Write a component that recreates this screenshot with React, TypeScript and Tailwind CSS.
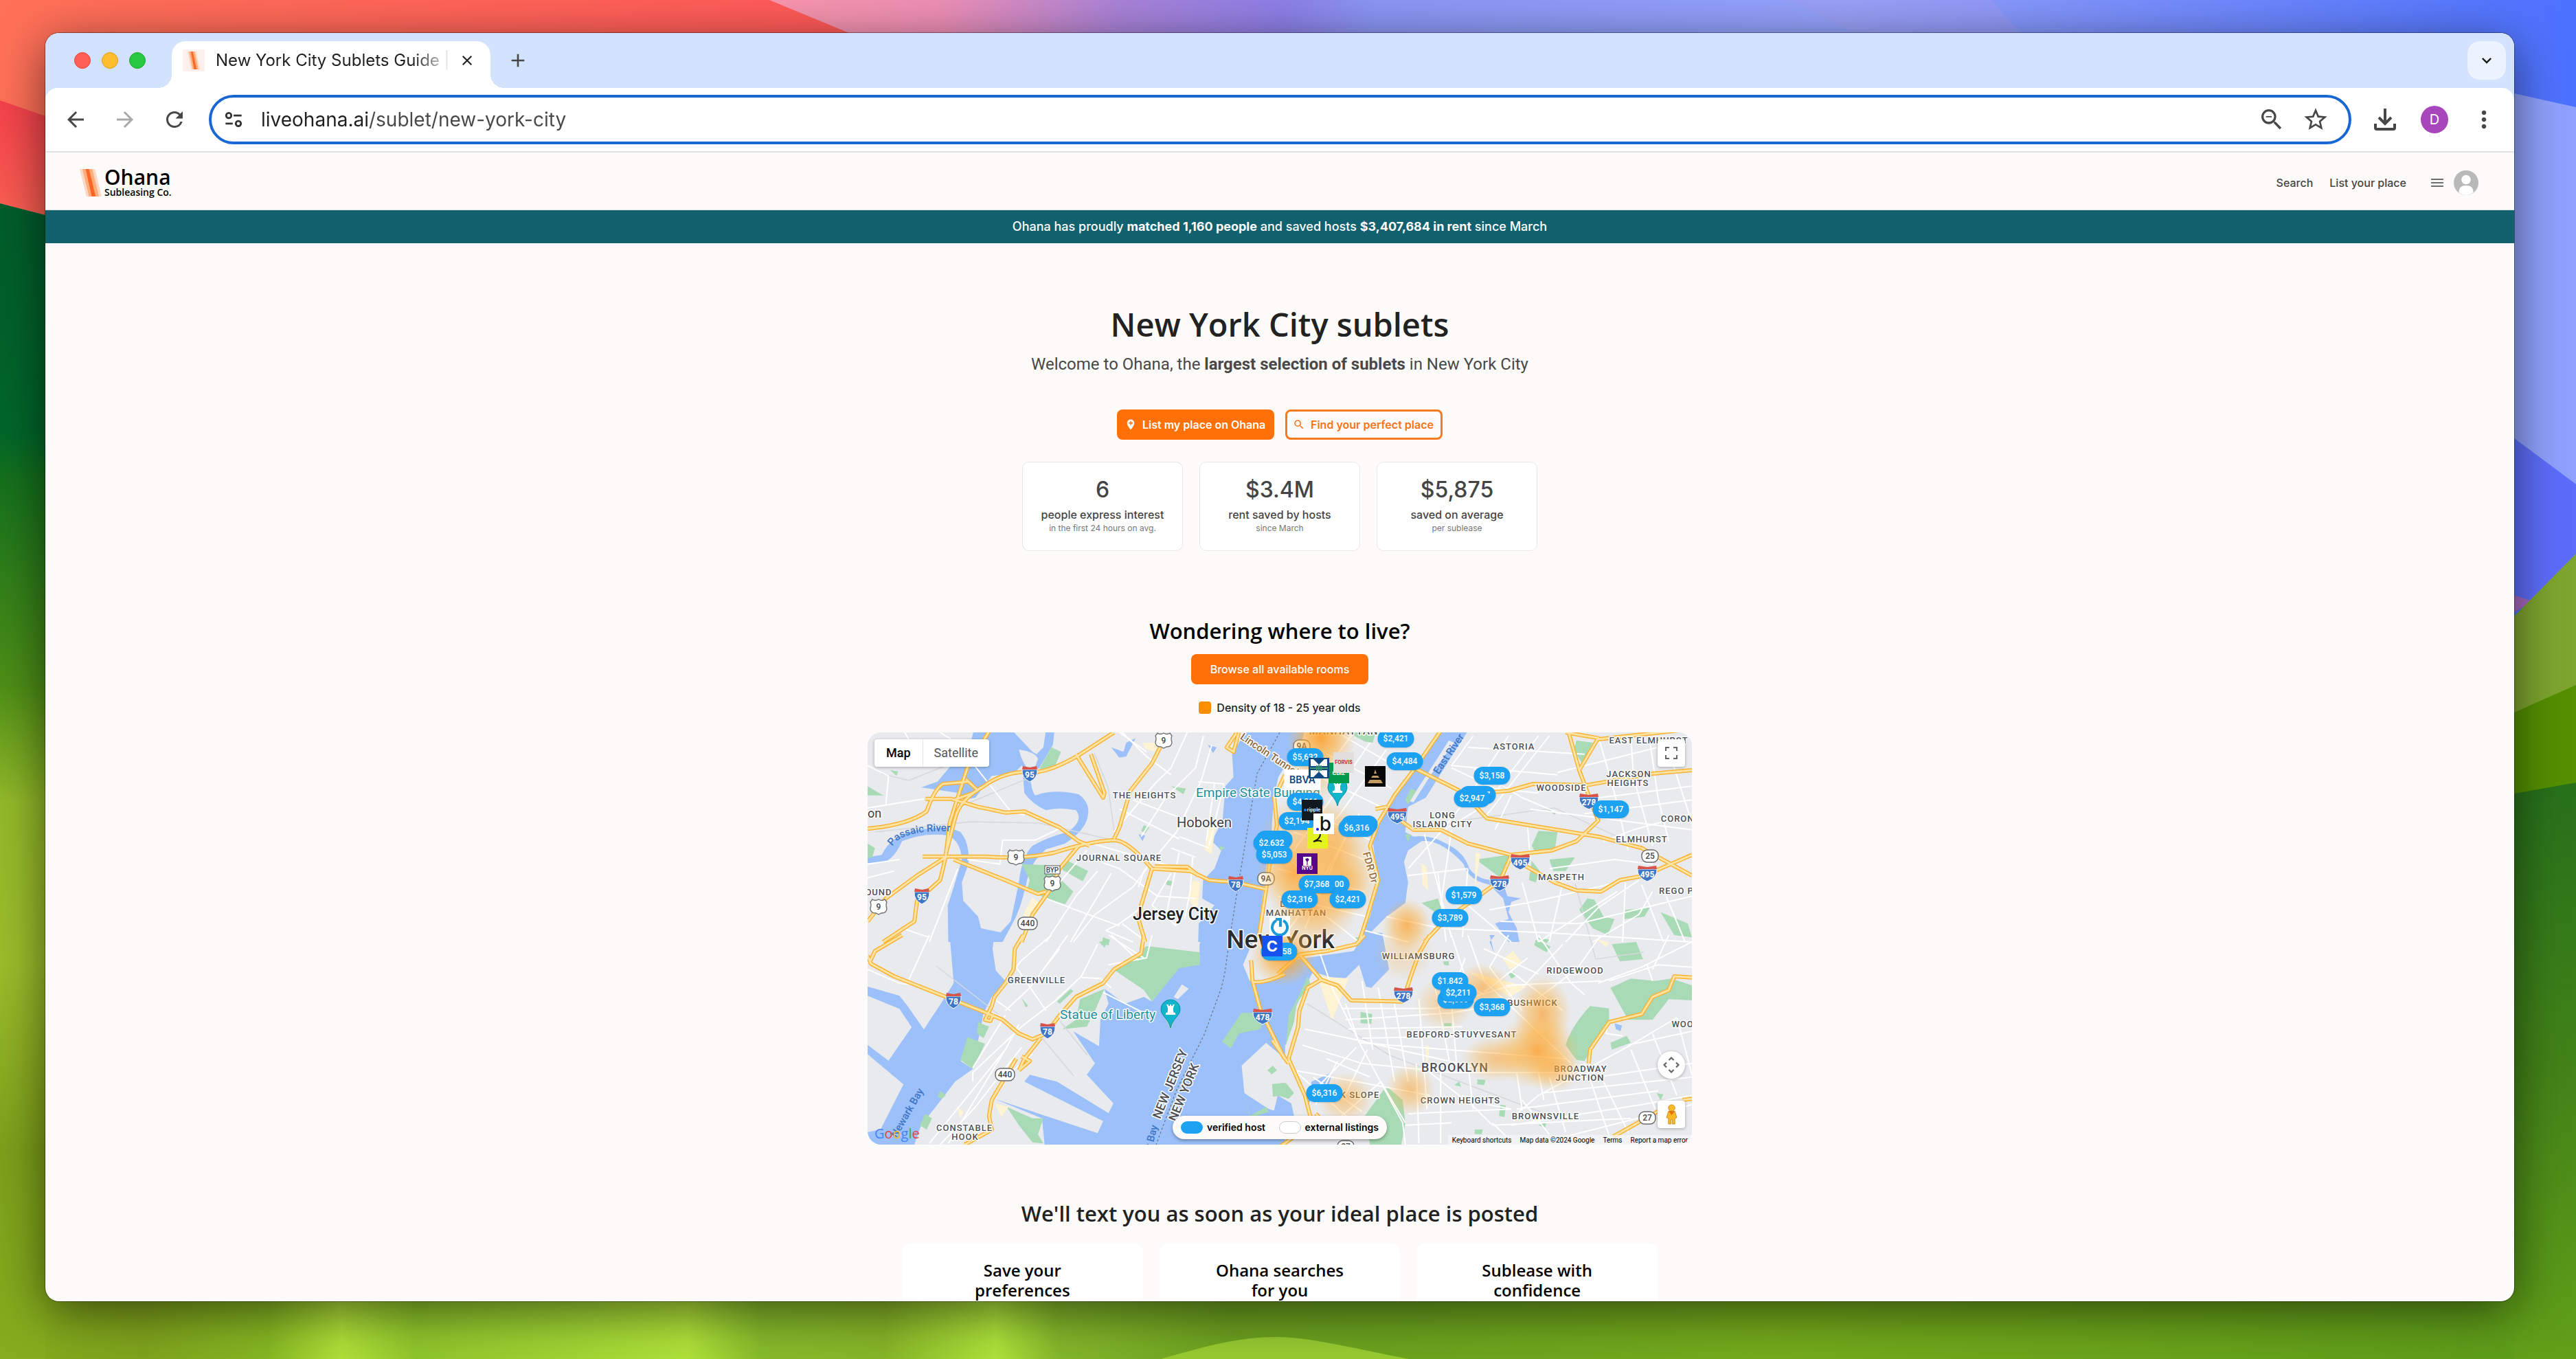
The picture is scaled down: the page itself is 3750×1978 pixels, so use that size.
import React from "react";
import {
  MdAdd,
  MdAddLocation,
  MdArrowBack,
  MdArrowForward,
  MdClose,
  MdExpandMore,
  MdMoreVert,
  MdRefresh,
  MdSearch,
  MdStarBorder,
  MdZoomOut,
} from "react-icons/md";

/* ---------- desktop wallpaper ---------- */

function Wallpaper() {
  return (
    <svg
      className="absolute inset-0 h-full w-full"
      viewBox="0 0 3750 1978"
      preserveAspectRatio="none"
      aria-hidden="true"
    >
      <defs>
        <linearGradient id="coral" x1="0" y1="0" x2="1" y2="0">
          <stop offset="0" stopColor="#ff7158" />
          <stop offset="1" stopColor="#ff5257" />
        </linearGradient>
        <linearGradient id="topband" gradientUnits="userSpaceOnUse" x1="1100" y1="0" x2="3750" y2="0">
          <stop offset="0" stopColor="#f996ac" />
          <stop offset="0.1" stopColor="#ee8fb4" />
          <stop offset="0.2" stopColor="#a983d8" />
          <stop offset="0.29" stopColor="#8d7fe6" />
          <stop offset="0.34" stopColor="#8a96f3" />
          <stop offset="0.6" stopColor="#93a3fb" />
          <stop offset="0.72" stopColor="#7f93fb" />
          <stop offset="1" stopColor="#4c71ff" />
        </linearGradient>
        <linearGradient id="leftRed" x1="0" y1="0" x2="0" y2="1">
          <stop offset="0" stopColor="#f5414b" />
          <stop offset="1" stopColor="#fd6f54" />
        </linearGradient>
        <linearGradient id="leftGreen" gradientUnits="userSpaceOnUse" x1="0" y1="290" x2="0" y2="1978">
          <stop offset="0" stopColor="#005c2b" />
          <stop offset="0.2" stopColor="#00672a" />
          <stop offset="0.24" stopColor="#14701c" />
          <stop offset="0.42" stopColor="#4e8f16" />
          <stop offset="0.52" stopColor="#93b929" />
          <stop offset="0.66" stopColor="#9cbd2b" />
          <stop offset="0.82" stopColor="#7da01a" />
          <stop offset="1" stopColor="#86ad1d" />
        </linearGradient>
        <linearGradient id="rightLow" gradientUnits="userSpaceOnUse" x1="0" y1="1140" x2="0" y2="1978">
          <stop offset="0" stopColor="#27711b" />
          <stop offset="0.5" stopColor="#438318" />
          <stop offset="1" stopColor="#62a019" />
        </linearGradient>
        <linearGradient id="bottom" gradientUnits="userSpaceOnUse" x1="66" y1="0" x2="3660" y2="0">
          <stop offset="0" stopColor="#83a91c" />
          <stop offset="0.04" stopColor="#7fa31c" />
          <stop offset="0.09" stopColor="#86b722" />
          <stop offset="0.12" stopColor="#b0e038" />
          <stop offset="0.15" stopColor="#8fc62b" />
          <stop offset="0.21" stopColor="#9fd433" />
          <stop offset="0.26" stopColor="#b0e239" />
          <stop offset="0.29" stopColor="#86bb2a" />
          <stop offset="0.34" stopColor="#87b527" />
          <stop offset="0.385" stopColor="#aee33a" />
          <stop offset="0.41" stopColor="#84b82a" />
          <stop offset="0.48" stopColor="#6ca11f" />
          <stop offset="0.55" stopColor="#6ba41e" />
          <stop offset="0.7" stopColor="#74ab1b" />
          <stop offset="1" stopColor="#5e9d19" />
        </linearGradient>
      </defs>
      <rect width="3750" height="1978" fill="url(#topband)" />
      <path d="M0 0H1120L1236 48 1600 220H0Z" fill="url(#coral)" />
      <path d="M2900 0 2940 48 2700 48 2600 0Z" fill="#a39cf0" opacity="0.4" />
      <path d="M0 146 66 169 200 220V400L66 313 0 296Z" fill="url(#leftRed)" />
      <path d="M0 296 66 313 300 400V1978H0Z" fill="url(#leftGreen)" />
      <path d="M3600 125 3660 136 3750 156V705L3660 638 3600 600Z" fill="#8fa1fd" />
      <path d="M3600 590 3660 638 3750 705V820L3600 940Z" fill="#5d6dfb" />
      <path d="M3640 860 3690 876 3640 900Z" fill="#a768c0" />
      <path d="M3600 925 3660 897 3750 806V1020L3600 1060Z" fill="#7ea52f" />
      <path d="M3600 1045 3660 1037 3750 997V1150L3600 1170Z" fill="#549000" />
      <path d="M3600 1160 3660 1155 3750 1139V1978H3600Z" fill="url(#rightLow)" />
      <rect x="66" y="1860" width="3594" height="118" fill="url(#bottom)" />
      <path d="M1690 1978C1770 1955 1810 1946 1857 1946S1960 1960 2050 1978Z" fill="#97cb31" />
    </svg>
  );
}

/* ---------- browser chrome ---------- */

function TuneIcon() {
  return (
    <svg viewBox="0 0 24 24" className="size-7" fill="none" stroke="#333" strokeWidth="2.4" aria-hidden="true">
      <circle cx="6" cy="7" r="3.2" />
      <path d="M12 7h10M2 17h9" />
      <circle cx="18" cy="17" r="3.2" />
    </svg>
  );
}

function BrandMark({ className }: { className: string }) {
  return (
    <svg viewBox="0 0 33 40" className={className} preserveAspectRatio="none" aria-hidden="true">
      <path d="M0 0H23L33 40H10Z" fill="#fdd9c4" />
      <path d="M4 0H19L29 40H14Z" fill="#fdae7c" />
      <path d="M9 0H14L24 40H18Z" fill="#ff6526" />
    </svg>
  );
}

function TabStrip() {
  return (
    <div className="flex h-20 shrink-0 items-end bg-[#d3e3fd] pr-3">
      <div className="flex h-full items-center gap-4 pr-[38px] pl-[42px]">
        <button aria-label="Close window" className="size-6 rounded-full border border-[#e2463f] bg-[#ff5f57]" />
        <button aria-label="Minimize window" className="size-6 rounded-full border border-[#e0a023] bg-[#febc2e]" />
        <button aria-label="Zoom window" className="size-6 rounded-full border border-[#1dad2b] bg-[#28c840]" />
      </div>
      <div className="relative flex h-[68px] w-[464px] items-center rounded-t-[20px] bg-white pr-[18px] pb-3 pl-4">
        <span className="absolute bottom-0 -left-5 size-5 bg-[radial-gradient(circle_at_0_0,transparent_20px,#fff_20px)]" />
        <span className="absolute -right-5 bottom-0 size-5 bg-[radial-gradient(circle_at_100%_0,transparent_20px,#fff_20px)]" />
        <span className="flex size-8 shrink-0 items-center justify-center bg-[#faf0ec]">
          <BrandMark className="h-[26px] w-[18px]" />
        </span>
        <span className="ml-4 flex-1 overflow-hidden bg-[linear-gradient(90deg,#1f1f1f_85%,#1f1f1f1a_100%)] bg-clip-text text-2xl whitespace-nowrap text-transparent">
          New York City Sublets Guide | Ohana
        </span>
        <button aria-label="Close tab" className="ml-3 flex size-8 items-center justify-center text-[#1f1f1f]">
          <MdClose className="size-6" />
        </button>
      </div>
      <button aria-label="New tab" className="mb-6 ml-6 flex size-8 items-center justify-center text-[#474747]">
        <MdAdd className="size-8" />
      </button>
      <button
        aria-label="Search tabs"
        className="mb-3 ml-auto flex size-14 items-center justify-center rounded-[18px] bg-[#ecf2fe] text-[#1f1f1f]"
      >
        <MdExpandMore className="size-7" />
      </button>
    </div>
  );
}

function Toolbar() {
  return (
    <div className="shrink-0 bg-[#d3e3fd]">
      <div className="flex h-[94px] items-center rounded-t-[18px] border-b-2 border-[#e1e3e1] bg-white pr-[28px] pl-[28px] text-[#474747]">
        <button aria-label="Back" className="flex size-8 items-center justify-center">
          <MdArrowBack className="size-9 shrink-0" />
        </button>
        <button aria-label="Forward" className="ml-10 flex size-8 items-center justify-center text-[#a9a9a9]">
          <MdArrowForward className="size-9 shrink-0" />
        </button>
        <button aria-label="Reload" className="ml-10 flex size-8 items-center justify-center">
          <MdRefresh className="size-9 shrink-0" />
        </button>
        <div className="ml-[34px] flex h-[72px] flex-1 items-center rounded-full border-4 border-[#1967d2] pr-8 pl-[18px]">
          <TuneIcon />
          <input
            aria-label="Address"
            defaultValue="liveohana.ai/sublet/new-york-city"
            className="ml-[26px] h-10 min-w-0 flex-1 bg-[linear-gradient(90deg,#1f1f1f_158px,#474747_158px)] bg-clip-text text-[28px] text-transparent outline-none"
          />
          <button aria-label="Zoom level" className="flex size-8 items-center justify-center">
            <MdZoomOut className="size-10 shrink-0" />
          </button>
          <button aria-label="Bookmark" className="ml-8 flex size-8 items-center justify-center">
            <MdStarBorder className="size-10 shrink-0" />
          </button>
        </div>
        <button aria-label="Downloads" className="ml-[33px] flex size-8 items-center justify-center">
          <svg viewBox="0 0 32 32" className="size-8 shrink-0" fill="none" stroke="#474747" strokeWidth="4" aria-hidden="true">
            <path d="M16 0V20M7 13 16 22 25 13M2 22V28Q2 30 4 30H28Q30 30 30 28V22" />
          </svg>
        </button>
        <button
          aria-label="Profile"
          className="ml-9 flex size-10 items-center justify-center rounded-full bg-[#a846bc] text-xl text-white"
        >
          D
        </button>
        <button aria-label="Menu" className="ml-9 flex size-8 items-center justify-center">
          <MdMoreVert className="size-10 shrink-0" />
        </button>
      </div>
    </div>
  );
}

/* ---------- site header ---------- */

function SiteHeader() {
  return (
    <header className="flex h-[84px] shrink-0 items-center border-b border-[#e3e3e0] pt-1 pr-[52px] pl-[50px]">
      <a href="#" className="flex items-center gap-1" aria-label="Ohana Subleasing Co.">
        <BrandMark className="h-10 w-8" />
        <span className="flex flex-col font-['Open_Sans'] text-black">
          <span className="text-[30px] leading-7 font-semibold">Ohana</span>
          <span className="text-[14px] leading-4 font-semibold">Subleasing Co.</span>
        </span>
      </a>
      <nav className="ml-auto flex items-center text-base font-medium text-[#444]">
        <a href="#">Search</a>
        <a href="#" className="ml-6">
          List your place
        </a>
        <button aria-label="Account menu" className="ml-9 flex items-center gap-[15px]">
          <svg viewBox="0 0 18 14" className="h-3.5 w-[18px]" stroke="#6d6d6d" strokeWidth="2" aria-hidden="true">
            <path d="M0 2H18M0 7H18M0 12H18" />
          </svg>
          <svg viewBox="0 0 36 36" className="size-9" aria-hidden="true">
            <circle cx="18" cy="18" r="18" fill="#b9b9b9" />
            <circle cx="18" cy="13.5" r="6.8" fill="#fff" />
            <path d="M7.5 32C7.5 25 11 22 18 22S28.5 25 28.5 32Q24 36 18 36T7.5 32Z" fill="#fff" />
          </svg>
        </button>
      </nav>
    </header>
  );
}

const stats = [
  { value: "6", label: "people express interest", note: "in the first 24 hours on avg." },
  { value: "$3.4M", label: "rent saved by hosts", note: "since March" },
  { value: "$5,875", label: "saved on average", note: "per sublease" },
];

function Hero() {
  return (
    <section className="flex flex-col items-center pt-[88px]">
      <h1 className="font-['Open_Sans'] text-[47px] leading-[60px] font-semibold text-[#222]">New York City sublets</h1>
      <p className="mt-3 font-[Roboto] text-2xl leading-8 text-[#484848]">
        Welcome to Ohana, the <b className="font-bold">largest selection of sublets</b> in New York City
      </p>
      <div className="mt-[50px] flex gap-4 text-base font-semibold">
        <button className="flex h-11 w-[229px] items-center gap-2 rounded-lg bg-[#ff7108] pl-[11px] whitespace-nowrap text-white">
          <MdAddLocation className="size-[18px] shrink-0" />
          List my place on Ohana
        </button>
        <button className="flex h-11 w-[229px] items-center gap-2 rounded-lg border-[3px] border-[#f97a1c] pl-2 whitespace-nowrap text-[#f97316]">
          <MdSearch className="size-[18px] shrink-0" />
          Find your perfect place
        </button>
      </div>
      <div className="mt-8 flex gap-6">
        {stats.map((s) => (
          <div
            key={s.label}
            className="flex w-[234px] flex-col items-center rounded-[10px] border border-[#e9e7e5] bg-white pt-5 pb-6 whitespace-nowrap"
          >
            <span className="text-[32px] leading-10 font-medium text-[#444]">{s.value}</span>
            <span className="mt-1 text-base leading-6 font-medium text-[#444]">{s.label}</span>
            <span className="text-xs leading-4 text-[#767676]">{s.note}</span>
          </div>
        ))}
      </div>
    </section>
  );
}

/* ---------- map ---------- */

/* Quadrant frames: each sheet of the map is digitised on its own 1568x960 grid. */
const frames = {
  nw: "translate(-13 -15) scale(.3954 .33333)",
  sw: "translate(-13 295) scale(.3954 .33333)",
  ne: "translate(597 -15) scale(.3954 .33333)",
  se: "translate(597 295) scale(.3954 .33333)",
};
type Frame = keyof typeof frames;

const water: Record<Frame, string[]> = {
  nw: [
    "M425 30H560L640 130 655 140 680 110 690 30H722L715 100 665 200 625 220 600 190 570 225 490 235 430 330 385 340 370 310 230 285 290 260 340 190 480 190 400 150Z",
    "M605 230 632 235Q635 300 650 320 720 290 810 315 850 350 845 400 840 470 760 530L690 555Q640 600 622 680 600 800 575 860L530 960H490L560 870 590 700Q600 590 640 540 700 500 770 480 830 430 800 385 740 370 690 385 640 360 610 310Z",
    "M33 590 85 580Q120 490 220 470 330 450 375 480 410 530 404 620L380 700 385 780 440 850 450 900 530 920 510 960H330L328 800 350 720 380 600Q375 520 330 495 240 480 160 520 130 600 90 612L33 616Z",
    "M1430 30H1620L1600 130 1545 240 1530 320 1522 440 1520 500 1505 600 1490 740 1465 960H1250L1252 880 1310 800 1265 770 1268 690 1310 640 1335 560 1300 520 1340 430 1350 280 1380 240 1375 140Z",
    "M930 110 975 130 985 90 1020 70 985 150 960 155Z",
    "M1285 100 1318 110 1305 135ZM1030 490 1055 495 1045 520Z",
  ],
  sw: [
    "M335 0H500L493 60 505 155 540 200 490 270 460 340 440 460 375 550 420 585 355 640 290 740 230 830 205 915H33V225L150 265 180 310 240 412 305 295 350 210Z",
    "M1270 0H1465L1440 60 1415 130 1440 200 1570 210V540L1500 470 1410 570 1420 690 1510 760 1570 780V920H685L675 800 500 715 880 865 900 812 610 640 630 610 730 640 920 778 938 735 840 610 870 560 790 420 885 485 890 370 920 300 905 235 980 300 1050 270 1080 290 1180 140 1255 130 1255 40Z",
  ],
  ne: [
    "M-40 30H100L90 80 0 240-60 330-80 960H-120Z",
    "M595 30H705L640 150 545 330 480 370 470 480 500 500Q560 490 620 530 690 570 705 640 740 690 790 690L830 700 845 760 895 770 860 785 850 830 880 900 890 960H850L800 880 850 860 830 770 780 710Q700 690 685 620 600 510 530 520L480 560 465 610 480 700 470 790 400 850 350 910 300 960 340 850 370 700 350 520 400 380 500 210Z",
  ],
  se: [
    "M-110 210 0 180 75 105 280 70 320-10H385L410 150 345 230 325 225 300 130 240 200 130 160 100 230 60 330 30 480 0 470-110 440Z",
    "M0 700 50 735 60 790-20 800ZM780 0H800L780 30 797 80 785 20ZM1240 385 1268 395 1262 420 1245 410Z",
    "M105 750 125 640 200 600 190 650 140 690Z",
  ],
};

const land: Record<Frame, string[]> = {
  nw: ["M590 120Q650 130 660 160L640 230Q600 180 590 120Z"],
  sw: [
    "M33 265 150 322 195 402 110 548 33 480Z",
    "M33 520 165 652 80 850 33 860Z",
    "M1160 270 1190 215 1215 235 1175 280Z",
  ],
  ne: ["M630 80 650 90 570 220 500 350 485 345 560 210Z"],
  se: [],
};

const parks: Record<Frame, string[]> = {
  nw: [
    "M710 110 745 130 720 200 665 205Z",
    "M760 600 845 650 825 695 750 645ZM600 620 690 625 790 740 760 795 690 770 620 730 630 690Z",
    "M33 530 60 550 50 590 33 595ZM33 280 90 320 33 320ZM115 210 145 215 140 235Z",
    "M1050 450 1070 460 1055 485 1040 475ZM1150 280 1205 290 1195 315ZM1135 690 1155 695 1150 715 1133 710ZM1330 540 1350 550 1330 560Z",
    "M900 940 925 950 920 975 895 965Z",
  ],
  sw: [
    "M1060 48 1255 75 1255 130 1180 145 1080 290 1050 240 945 155Z",
    "M815 280 905 235 870 330 840 400 750 410 800 370ZM440 380 480 400 460 450 435 430ZM400 445 465 475 420 585 375 545Z",
    "M545 750 640 800 680 800 660 870 680 910 640 905 590 830ZM245 780 270 800 250 850 225 830ZM300 680 322 700 305 715 290 705Z",
    "M1410 338 1495 345 1480 410 1400 430 1370 495 1338 465ZM1505 590 1525 570 1540 590 1520 608ZM1420 690 1440 790 1500 750 1510 770 1440 800Z",
    "M730 290 780 235 790 245 740 300ZM600 275 625 310 615 315ZM885 30 920 20 905 55Z",
    "M1522 650 1568 645V700L1525 705ZM1130 370 1160 380 1150 410Z",
  ],
  ne: [
    "M1100 80 1160 90 1120 180 1090 120ZM960 475 1030 480 1020 560 950 570 935 540Z",
    "M730 600 850 580 860 600 820 680ZM935 605 965 650 950 700 925 690ZM1000 600 1095 590 1060 650 1015 650Z",
    "M985 375 1025 390 1020 405ZM1140 770 1165 775 1200 850 1240 860 1215 930 1160 900 1110 820ZM1280 820 1370 810 1350 850 1275 860Z",
    "M1410 830 1510 880 1525 940 1460 930ZM530 790 590 770 610 840 580 830ZM260 45H360L350 90 320 85ZM470 490 490 490 480 525ZM950 940 1000 950 990 965Z",
    "M490 290 510 300 480 360 470 340Z",
  ],
  se: [
    "M1060 480Q1080 400 1150 310L1220 320 1220 370 1130 550 1100 545ZM1225 230 1300 190 1390 200 1450 190 1525 220V285L1440 280 1380 370 1290 370Z",
    "M1230 40 1320 30 1345 105 1260 115ZM950 20 1005 50 990 75 945 45ZM320 790 400 660 460 720 470 820 455 915H340Z",
    "M0 660 30 645 60 690 40 715 0 700ZM305 335 348 345 345 388 305 385ZM735 630 765 632 760 655 735 652ZM820 740 840 745 835 795 815 790ZM960 830 990 815 985 840ZM725 850 755 848 750 870 725 868ZM1395 690 1420 695 1410 720Z",
    "M1285 440 1300 470 1230 500 1225 470ZM850 170 870 160 875 180 860 190ZM612 385 640 385 640 402 612 402ZM610 115 630 115 630 133 612 130ZM650 655 668 640 675 662Z",
    "M285 10 315 10 300 50ZM80 260 110 180 120 210 70 300 60 380 30 480 40 350Z",
  ],
};

const streets: Record<Frame, string[]> = {
  nw: [
    "M33 190 110 235 100 360M170 45 200 110M33 375 240 335M430 195 560 390 610 405M300 45 340 75",
    "M970 45 1060 150 1150 230M1210 45 1150 200 1090 270 940 480M1270 60 1240 200 1130 330 1040 500M1300 100 1260 260 1170 480 1050 650 1030 720M960 380 1180 510M1010 340 1190 420M1250 260 1345 270M1345 270 1290 540M1180 500 1290 550",
    "M870 600 960 640 1100 760 1240 770M880 650 800 760 740 870 690 960M930 660 870 780 780 960M680 765 800 820 960 890M530 515 520 620 400 600M530 515 650 515 740 465M1060 640 1010 720 870 840 790 960M1180 570 1150 740 1130 860M1230 590 1220 740 1200 860M1150 550 1240 590M1150 660 1080 800 1170 890M33 620 150 600M33 680 130 650M365 640 260 960M160 900 260 940M1310 270 1280 520M860 530 1180 640M960 45 1060 130",
    "M1030 820 960 880 910 910 1010 960M970 880 1060 960M840 560 740 700",
  ],
  sw: [
    "M260 0 185 195M33 150 150 210 190 215M590 390 540 500 260 910M600 400 420 600 420 640M545 490 330 910M600 490 430 750 300 915M640 520 520 640M560 330 500 280M540 350 420 580",
    "M710 0 600 110 580 140 690 330M770 0 680 150 630 230 540 330M680 150 740 60M880 40 820 180 720 290 600 400M920 0 1050 100M1080 0 1060 100 920 130M820 185 890 190 930 230M730 370 650 470 610 540M900 250 1050 340M930 0 1030 110",
  ],
  ne: [
    "M280 45 120 300M340 90 200 330 60 560M400 120 230 400 60 640M240 60 400 170M180 140 420 290M120 220 380 370M60 360 350 520M60 480 340 610M0 640 320 740M0 760 330 850M300 400 130 760 20 940M250 500 100 900",
    "M720 60 640 190 1030 230M850 60 700 330 600 480M960 60 780 340M1000 60 840 300 760 420M720 200 900 330 1040 400M640 200 800 290 960 310M700 110 1130 140M1030 220 1400 110M1120 340 1525 280M1130 400 1525 340M1180 60 1240 310 1290 560M1300 60 1310 240 1380 540M1370 80 1400 330 1440 520M1430 90 1525 440M740 380 600 480 480 640M860 320 800 470M920 460 930 600M640 470 600 800M540 490 640 940M480 670 700 640M700 640 680 940M590 660 620 960M780 820 960 780 1250 700M820 870 1110 880 1525 760M960 960 1250 740M1060 960 1180 810 1330 690M1160 960 1330 840 1380 740M1270 960 1280 700M1420 960 1340 710M1050 700 1000 960M900 700 960 960M1000 640 1240 600 1380 620M1200 520 1310 470 1525 400M1500 960 1430 760M930 380 1525 470",
    "M400 850 600 900 1000 920 1525 960M700 800 860 960M180 850 300 960M320 910 480 960",
  ],
  se: [
    "M150 60 200 230 310 490 460 820 470 915M90 480 310 560 640 600 1080 600M100 410 300 460 480 510 780 590M300 470 1060 540M250 300 300 470M60 590 290 640 560 700M310 200 350 500M370 230 430 640M430 300 480 640M520 280 550 760M580 230 640 600M640 300 660 580M240 320 580 320 860 220M250 370 640 340 880 290M260 410 680 400M310 450 740 440M380 640 150 880M380 640 470 820M510 560 520 910M600 560 600 910M560 600 690 720 860 760M700 560 720 760",
    "M640 0 700 220 760 260M700 0 760 200 1080 560M850 0 780 140 900 330M920 100 760 250M960 0 1080 210 1130 260M860 160 1050 330M1050 40 900 230M1190 0 1100 150 930 300M1525 30 1340 140 1180 210M1220 200 1400 130 1525 140M1360 130 1380 200M840 220 1190 200M760 60 960 170M1440 0 1380 150M690 100 640 260",
    "M860 800 960 700 1300 480 1470 360M1060 640 1525 560M970 690 1525 620M880 760 1400 680M860 830 1340 740 1525 700M790 830 1300 800M1000 620 1060 860M1130 560 1230 910M1200 640 1290 860M1300 500 1390 760M1380 430 1470 700M1470 360 1525 610M900 720 1000 870M790 820 860 900M640 820 470 830M1270 440 1210 430 1215 380M1290 480 1525 420M680 700 790 830M1060 880 1525 740M880 600 900 760M960 600 980 720",
    "M180 540 340 620M130 620 310 770M60 590 300 840M330 500 240 720M290 490 100 720M220 550 140 740M480 780 860 760",
  ],
};

const highways: Record<Frame, string[]> = {
  nw: [
    "M485 30 400 200 370 310 335 440 320 590 300 690 215 780 205 870 90 960",
    "M33 465Q180 450 250 390 280 290 310 270L400 260M245 335 340 335 440 370 540 395 610 390 740 460 810 520 850 540",
    "M940 45 810 145Q700 220 640 218 540 210 460 280 370 340 355 420L320 580",
    "M235 587 470 587Q600 600 720 570 850 520 940 515 990 515 1080 640L1220 650 1290 690 1390 700 1500 730",
    "M1110 110 1080 180 1000 300 960 460 940 510M800 140 900 330 905 310 855 140",
    "M320 590 215 670 100 770 33 870M350 600 540 690 660 750 690 740M810 540 740 640 700 740 640 840 600 960M1080 640 1040 800 1030 860 1055 960",
    "M1400 45 1380 130 1355 110 1390 50M1570 230 1530 330 1540 450 1520 560 1500 730 1470 960M1090 630 1210 632 1250 670",
    "M395 250 440 300M350 340 420 310",
  ],
  sw: [
    "M160 0 60 70 40 120M33 90 45 125 130 180 300 260 450 330 530 370 590 430 640 455 690 430 740 350 800 270 900 210 940 150 1040 80 1050 0",
    "M605 0 575 60 570 150 540 210 500 270 490 310 465 370 485 375 495 345M670 450 610 540 590 590M580 540 530 640 490 720 480 790 490 850 390 915M600 530 630 550 590 590",
    "M1445 110 1450 200 1480 330 1568 540M1455 205Q1500 210 1568 170",
  ],
  ne: [
    "M605 30 500 210 430 320 370 440 340 540 370 690 330 850 300 960M510 205 670 300M750 310 850 300 940 270 1140 275 1380 225 1525 210",
    "M440 420 500 470 600 470 700 530 860 580 1010 560 1100 520 1180 430 1110 210 1070 40M1110 210 1180 70 1060 45M1180 75 1525 30",
    "M860 580 820 690 740 760 620 860 540 960M900 620 1020 700 1100 735 1190 740 1260 690 1350 670 1525 580M730 370 770 420 1180 500 1340 550 1525 670",
    "M360 380 400 370",
  ],
  se: [
    "M320 0 290 40 180 70 80 85 0 170M80 85 160 195 220 220 270 285 460 290 490 180 520 80 560 0",
    "M160 195 110 230 80 330 75 400 40 540 100 700 120 790 180 840M-20 460 40 560",
    "M1145 560 1150 500 1220 380 1340 345 1380 270 1440 240 1460 180 1525 185M1235 880 1340 810 1400 770M1490 720 1525 715",
    "M-10 940 60 880M140 780 180 830",
  ],
};

const heat = [
  [660, 8, 50, 54, 1],
  [650, 60, 44, 44, 0.4],
  [640, 150, 70, 60, 0.55],
  [680, 150, 50, 50, 0.4],
  [622, 205, 56, 55, 0.9],
  [680, 190, 60, 60, 0.65],
  [650, 255, 64, 54, 0.75],
  [690, 225, 54, 48, 0.65],
  [605, 325, 48, 44, 1],
  [785, 280, 36, 38, 0.8],
  [780, 320, 44, 44, 0.3],
  [840, 395, 44, 40, 0.45],
  [895, 372, 42, 36, 0.65],
  [982, 410, 42, 58, 0.75],
  [975, 465, 62, 54, 0.9],
  [915, 475, 52, 34, 0.6],
  [1000, 490, 40, 34, 0.5],
  [790, 520, 36, 38, 0.6],
  [695, 532, 42, 38, 0.55],
];

type Label = { t: string; x: number; y: number; s?: number };

const districts: Label[] = [
  { t: "THE HEIGHTS", x: 403, y: 96 },
  { t: "JOURNAL SQUARE", x: 366, y: 187 },
  { t: "GREENVILLE", x: 246, y: 365 },
  { t: "CONSTABLE", x: 141, y: 580 },
  { t: "HOOK", x: 142, y: 593 },
  { t: "OUND", x: 16, y: 237 },
  { t: "ASTORIA", x: 941, y: 25 },
  { t: "EAST ELMHURST", x: 1137, y: 16 },
  { t: "WOODSIDE", x: 1010, y: 85 },
  { t: "JACKSON", x: 1108, y: 65 },
  { t: "HEIGHTS", x: 1107, y: 78 },
  { t: "LONG", x: 837, y: 125 },
  { t: "ISLAND CITY", x: 837, y: 138 },
  { t: "CORONA", x: 1184, y: 130 },
  { t: "ELMHURST", x: 1127, y: 160 },
  { t: "MASPETH", x: 1010, y: 215 },
  { t: "REGO PARK", x: 1191, y: 235 },
  { t: "MANHATTAN", x: 693, y: 3, s: 15 },
  { t: "LOWER", x: 624, y: 254 },
  { t: "MANHATTAN", x: 624, y: 267 },
  { t: "WILLIAMSBURG", x: 802, y: 330 },
  { t: "RIDGEWOOD", x: 1030, y: 351 },
  { t: "BUSHWICK", x: 968, y: 398 },
  { t: "BEDFORD-STUYVESANT", x: 865, y: 444 },
  { t: "BROADWAY", x: 1038, y: 494 },
  { t: "JUNCTION", x: 1037, y: 507 },
  { t: "WOODHAVEN", x: 1215, y: 429 },
  { t: "PARK SLOPE", x: 703, y: 532 },
  { t: "CROWN HEIGHTS", x: 863, y: 540 },
  { t: "BROWNSVILLE", x: 987, y: 563 },
];

function Shield({ x, y, n }: { x: number; y: number; n: string }) {
  const w = n.length > 2 ? 14 : 11;
  return (
    <g transform={`translate(${x} ${y})`}>
      <path
        d={`M${-w} -6Q${-w - 1} 6 0 12Q${w + 1} 6 ${w} -6Z`}
        fill="#3f77c6"
        stroke="#fff"
        strokeWidth="1"
      />
      <path d={`M${-w} -6L${-w + 1} -11 0 -9 ${w - 1} -11 ${w} -6Z`} fill="#d8534a" />
      <text y="6" textAnchor="middle" fontSize="12" fontWeight="700" fill="#fff">
        {n}
      </text>
    </g>
  );
}

function RouteBadge({ x, y, n }: { x: number; y: number; n: string }) {
  const w = n.length > 2 ? 14 : 12;
  return (
    <g transform={`translate(${x} ${y})`}>
      <rect x={-w} y="-9" width={w * 2} height="18" rx="8" fill="#fff" stroke="#6b6b6b" strokeWidth="1.5" />
      <text y="4" textAnchor="middle" fontSize="12" fontWeight="500" fill="#444">
        {n}
      </text>
    </g>
  );
}

function UsRoute({ x, y }: { x: number; y: number }) {
  return (
    <g transform={`translate(${x} ${y})`}>
      <path
        d="M-9-11Q-5-8 0-11 5-8 9-11L12-7Q10-3 12 2 12 9 4 9L0 11-4 9Q-12 9-12 2-10-3-12-7Z"
        fill="#fff"
        stroke="#6b6b6b"
        strokeWidth="1.3"
      />
      <text y="4" textAnchor="middle" fontSize="12" fontWeight="500" fill="#444">
        9
      </text>
    </g>
  );
}

function Landmark({ x, y }: { x: number; y: number }) {
  return (
    <g transform={`translate(${x} ${y})`}>
      <path d="M0 0C-3-14-14-17-14-27A14 14 0 0 1 14-27C14-17 3-14 0 0Z" fill="#12b5cb" stroke="#0e8f9f" />
      <path d="M-6-34H-3V-32H-1V-34H1V-32H3V-34H6L4-29V-24L5-22H7V-19H-7V-22H-5L-4-24V-29Z" fill="#fff" />
    </g>
  );
}

const frameKeys: Frame[] = ["nw", "sw", "ne", "se"];

function Layer({ data, children }: { data: Record<Frame, string[]>; children: (d: string, k: string) => React.ReactNode }) {
  return (
    <>
      {frameKeys.map((f) => (
        <g key={f} transform={frames[f]}>
          {data[f].map((d, i) => children(d, f + i))}
        </g>
      ))}
    </>
  );
}

function MapCanvas() {
  return (
    <svg
      viewBox="0 0 1200 600"
      preserveAspectRatio="xMidYMid slice"
      className="absolute inset-0 h-full w-full font-[Roboto]"
      role="img"
      aria-label="Map of New York City and Jersey City"
    >
      <defs>
        <radialGradient id="hot">
          <stop offset="0" stopColor="#ff9a1f" stopOpacity="0.85" />
          <stop offset="0.5" stopColor="#ffab30" stopOpacity="0.55" />
          <stop offset="1" stopColor="#ffbb55" stopOpacity="0" />
        </radialGradient>
        <path id="passaic" d="M36 166Q50 142 118 144" />
      </defs>
      <rect width="1200" height="600" fill="#e8eaed" />
      <Layer data={water}>{(d, k) => <path key={k} d={d} fill="#9cc0f9" />}</Layer>
      <Layer data={land}>{(d, k) => <path key={k} d={d} fill="#e8eaed" />}</Layer>
      <Layer data={parks}>{(d, k) => <path key={k} d={d} fill="#a8dab5" />}</Layer>
      <g fill="#fef3d2">
        <path d="M400 15H425L418 28 404 24ZM240 240 250 248 238 270 226 266ZM185 540 205 545 195 560ZM130 545 140 552 135 562ZM474 215 484 218 480 262 466 240ZM500 130 508 132 500 178 490 170Z" />
        <path d="M806 190 814 196 816 230 808 222ZM885 175 892 176 884 230ZM655 355 700 358 676 420ZM870 345 880 350 960 370 935 385ZM925 330 940 318 952 335 935 345ZM1060 300 1080 306 1075 312ZM812 455 818 457 814 500Z" />
      </g>
      <g fill="none" stroke="#d5d8dc" strokeWidth="1.5">
        <path d="M10 145 150 130 250 132 350 155M330 30 350 80 360 150M130 110 250 60M20 60 60 70 110 50M640 395 760 470 1000 560M850 130 1000 110 1110 160M1030 220 1060 330 1130 320" />
        <path d="M100 340 190 410M250 440 300 500M280 420 320 470" />
      </g>
      <Layer data={streets}>
        {(d, k) => (
          <path key={k} d={d} fill="none" stroke="#fff" strokeWidth="2" strokeLinejoin="round" vectorEffect="non-scaling-stroke" />
        )}
      </Layer>
      <Layer data={highways}>
        {(d, k) => (
          <path key={k} d={d} fill="none" stroke="#f9b233" strokeWidth="6" strokeLinejoin="round" vectorEffect="non-scaling-stroke" />
        )}
      </Layer>
      <Layer data={highways}>
        {(d, k) => (
          <path key={k} d={d} fill="none" stroke="#fee3a0" strokeWidth="3" strokeLinejoin="round" vectorEffect="non-scaling-stroke" />
        )}
      </Layer>
      <path
        d="M600 0 567 60 555 130 540 220 527 300 520 350 515 372 490 440 450 520 420 600"
        fill="none"
        stroke="#6d7480"
        strokeWidth="1.2"
        strokeDasharray="3 3"
      />

      <g fill="#4c5056" stroke="#fff" strokeWidth="3" strokeLinejoin="round" paintOrder="stroke" textAnchor="middle">
        {districts.map((l, i) => (
          <text key={i} x={l.x} y={l.y} fontSize={l.s ?? 13} fontWeight="500" letterSpacing="1">
            {l.t}
          </text>
        ))}
        <text x="855" y="494" fontSize="18" fontWeight="500" letterSpacing="1">
          BROOKLYN
        </text>
        <text x="490" y="138" fontSize="20" fill="#3c4043">
          Hoboken
        </text>
        <text x="0" y="124" fontSize="18" fill="#3c4043" textAnchor="start">
          on
        </text>
        <text x="448" y="273" fontSize="25" fontWeight="500" fill="#202124">
          Jersey City
        </text>
        <text x="601" y="314" fontSize="37" fontWeight="500" fill="#2b2c2f">
          New York
        </text>
        <text x="478" y="94" fontSize="19" fill="#1b8e9a" textAnchor="start">
          Empire State Building
        </text>
        <text x="280" y="417" fontSize="19" fill="#1b8e9a" textAnchor="start">
          Statue of Liberty
        </text>
        <text fontSize="15" fontWeight="500" transform="translate(731 197) rotate(74)" fill="#8a6a43" dominantBaseline="middle">
          FDR Dr
        </text>
        <text fontSize="15" fontWeight="500" transform="translate(582 36) rotate(34)" fill="#8a6a43">
          Lincoln Tunnel
        </text>
        <text fontSize="18" fontWeight="500" transform="translate(446 514) rotate(-68)">
          NEW JERSEY
        </text>
        <text fontSize="18" fontWeight="500" transform="translate(466 526) rotate(-68)">
          NEW YORK
        </text>
      </g>
      <g fill="#3d76c4" fontSize="15" fontWeight="500">
        <text textAnchor="middle" transform="translate(850 34) rotate(-56)">
          East River
        </text>
        <text textAnchor="middle" transform="translate(62 556) rotate(-60)">
          Newark Bay
        </text>
        <text textAnchor="middle" transform="translate(414 606) rotate(-76)">
          Upper Bay
        </text>
        <text>
          <textPath href="#passaic">Passaic River</textPath>
        </text>
      </g>

      <UsRoute x={431} y={12} />
      <UsRoute x={216} y={182} />
      <UsRoute x={269} y={220} />
      <UsRoute x={16} y={254} />
      <rect x="258" y="194" width="22" height="12" fill="#fff" stroke="#555" />
      <text x="269" y="204" fontSize="10" fontWeight="500" textAnchor="middle" fill="#444">
        BYP
      </text>
      <RouteBadge x={233} y={278} n="440" />
      <RouteBadge x={200} y={498} n="440" />
      <RouteBadge x={632} y={20} n="9A" />
      <RouteBadge x={580} y={213} n="9A" />
      <RouteBadge x={1139} y={180} n="25" />
      <RouteBadge x={1135} y={561} n="27" />
      <RouteBadge x={696} y={603} n="27" />
      <Shield x={236} y={60} n="95" />
      <Shield x={79} y={238} n="95" />
      <Shield x={536} y={220} n="78" />
      <Shield x={125} y={390} n="78" />
      <Shield x={262} y={434} n="78" />
      <Shield x={575} y={413} n="478" />
      <Shield x={771} y={121} n="495" />
      <Shield x={1050} y={100} n="278" />
      <Shield x={950} y={188} n="495" />
      <Shield x={920} y={219} n="278" />
      <Shield x={1135} y={205} n="495" />
      <Shield x={780} y={382} n="278" />

      {heat.map(([x, y, rx, ry, o], i) => (
        <ellipse key={i} cx={x} cy={y} rx={rx} ry={ry} fill="url(#hot)" opacity={o} />
      ))}
      <Landmark x={441} y={430} />
      <Landmark x={684} y={107} />
    </svg>
  );
}

type Pin = { x: number; y: number; price: string };

const pins: Pin[] = [
  { x: 769, y: 9, price: "$2,421" },
  { x: 782, y: 42, price: "$4,484" },
  { x: 637, y: 36, price: "$5,632" },
  { x: 909, y: 63, price: "$3,158" },
  { x: 888, y: 91, price: "$2,947" },
  { x: 880, y: 96, price: "$2,947" },
  { x: 1082, y: 112, price: "$1,147" },
  { x: 637, y: 101, price: "$4,211" },
  { x: 625, y: 129, price: "$2,194" },
  { x: 716, y: 134, price: "$6,316" },
  { x: 712, y: 139, price: "$6,316" },
  { x: 592, y: 156, price: "$2,632" },
  { x: 588, y: 161, price: "$2,632" },
  { x: 592, y: 178, price: "$5,053" },
  { x: 675, y: 221, price: "$2,000" },
  { x: 654, y: 221, price: "$7,368" },
  { x: 629, y: 243, price: "$2,316" },
  { x: 699, y: 243, price: "$2,421" },
  { x: 868, y: 237, price: "$1,579" },
  { x: 848, y: 270, price: "$3,789" },
  { x: 856, y: 389, price: "$2,000" },
  { x: 848, y: 362, price: "$1,842" },
  { x: 860, y: 379, price: "$2,211" },
  { x: 909, y: 400, price: "$3,368" },
  { x: 665, y: 525, price: "$6,316" },
  { x: 599, y: 319, price: "$3,158" },
];

const pct = (v: number, of: number) => `${(v / of) * 100}%`;

function PricePin({ x, y, price }: Pin) {
  return (
    <button
      className="absolute flex h-[26px] w-[53px] -translate-x-1/2 -translate-y-1/2 items-center justify-center rounded-full bg-[#1da1f2] font-[Roboto] text-xs font-medium text-white shadow-[0_1px_2px_rgba(0,0,0,0.15)]"
      style={{ left: pct(x, 1200), top: pct(y, 600) }}
    >
      {price}
    </button>
  );
}

function Company({ x, y, className, children }: { x: number; y: number; className: string; children: React.ReactNode }) {
  return (
    <div
      className={`absolute flex h-[30px] -translate-x-1/2 -translate-y-1/2 items-center justify-center overflow-hidden ${className}`}
      style={{ left: pct(x, 1200), top: pct(y, 600) }}
    >
      {children}
    </div>
  );
}

function Companies() {
  return (
    <>
      <Company x={633} y={69} className="w-[53px] bg-white text-sm font-semibold text-[#11427c]">
        BBVA
      </Company>
      <Company x={686} y={59} className="w-[30px] bg-[#009a4d] text-[8px] font-bold text-white">
        CBIZ
      </Company>
      <Company x={693} y={44} className="w-[30px] bg-[#e0dfdb] text-[7px] font-bold text-[#cf2e2e]">
        FORVIS
      </Company>
      <Company x={657} y={52} className="w-[30px] bg-[#0f4a82]">
        <svg viewBox="0 0 30 30" className="size-[30px]" aria-hidden="true">
          <path d="M3 2H7L15 10 23 2H27V12H3ZM3 28H7L15 20 23 28H27V18H3Z" fill="#fff" />
          <path d="M2 15H28M12 11V19M15 10V20M18 11V19" stroke="#3a9a6c" strokeWidth="1.8" />
        </svg>
      </Company>
      <Company x={739} y={64} className="w-[30px] bg-[#080808]">
        <svg viewBox="0 0 30 30" className="size-[30px]" fill="#c49a63" aria-hidden="true">
          <path d="M15 5 17 11H13ZM11 14H19L21 17H9ZM7 20H23L26 25H4Z" />
        </svg>
      </Company>
      <Company x={647} y={113} className="w-[30px] bg-[#101820] text-[7px] font-semibold text-white">
        <span className="mr-px size-1 rounded-full bg-[#0a86ff]" />
        ripple
      </Company>
      <Company x={655} y={154} className="w-[30px] bg-[#e4f222]">
        <svg viewBox="0 0 30 30" className="size-[30px]" fill="none" stroke="#111" strokeWidth="2" aria-hidden="true">
          <path d="M19 9Q19 16 9 20Q18 17 21 20" />
        </svg>
      </Company>
      <Company x={664} y={133} className="w-[30px] bg-white text-[28px] leading-none font-medium text-[#14141c]">
        <span className="mt-4 mr-px size-1 rounded-full bg-[#1616ff]" />b
      </Company>
      <Company x={640} y={191} className="w-[30px] flex-col bg-[#57068c] text-[7px] leading-[8px] font-bold text-white">
        <svg viewBox="0 0 12 13" className="h-[13px] w-3" aria-hidden="true">
          <path d="M0 0H12V13H0Z" fill="#fff" />
          <path d="M6 6V12M3.5 3.5 6 7 8.500 3.500" stroke="#57068c" strokeWidth="1.2" />
          <circle cx="6" cy="4" r="2" fill="#57068c" />
        </svg>
        NYU
      </Company>
      <Company x={600} y={282} className="w-[30px] bg-white">
        <svg viewBox="0 0 30 30" className="size-[30px]" fill="none" stroke="#1a9ad6" strokeWidth="4" aria-hidden="true">
          <path d="M10 7A11 11 0 1 0 20 7M9 5H16V16" />
        </svg>
      </Company>
      <Company x={589} y={311} className="w-[30px] bg-[#1652f0] text-[22px] font-bold text-white">
        C
      </Company>
    </>
  );
}

function MapPanel() {
  return (
    <div className="relative mt-6 aspect-[2/1] w-full max-w-[1200px] overflow-hidden rounded-[20px] bg-[#e8eaed]">
      <MapCanvas />
      {pins.map((p, i) => (
        <PricePin key={i} {...p} />
      ))}
      <Companies />

      <div className="absolute top-2.5 left-2.5 flex h-10 divide-x divide-[#e6e6e6] rounded-sm bg-white font-[Roboto] text-lg shadow-[0_1px_4px_rgba(0,0,0,0.3)]">
        <button className="px-[17px] font-medium text-black">Map</button>
        <button className="px-4 text-[#565656]">Satellite</button>
      </div>
      <button
        aria-label="Toggle fullscreen view"
        className="absolute top-2.5 right-2.5 flex size-10 items-center justify-center rounded-sm bg-white shadow-[0_1px_4px_rgba(0,0,0,0.3)]"
      >
        <svg viewBox="0 0 18 18" className="size-[18px]" fill="none" stroke="#666" strokeWidth="2" aria-hidden="true">
          <path d="M1 6V1H6M12 1H17V6M17 12V17H12M6 17H1V12" />
        </svg>
      </button>
      <button
        aria-label="Map camera controls"
        className="absolute right-2.5 bottom-24 flex size-10 items-center justify-center rounded-full bg-white shadow-[0_1px_4px_rgba(0,0,0,0.3)]"
      >
        <svg viewBox="0 0 24 24" className="size-6" fill="none" stroke="#666" strokeWidth="2.2" aria-hidden="true">
          <path d="M8.5 5 12 1.5 15.5 5M8.5 19 12 22.5 15.5 19M5 8.5 1.5 12 5 15.5M19 8.5 22.5 12 19 15.5" />
        </svg>
      </button>
      <button
        aria-label="Street View"
        className="absolute right-2.5 bottom-6 flex size-10 items-center justify-center rounded-sm bg-white shadow-[0_1px_4px_rgba(0,0,0,0.3)]"
      >
        <svg viewBox="0 0 18 32" className="h-[30px] w-[17px]" aria-hidden="true">
          <circle cx="9" cy="6" r="5" fill="#fbbc2c" stroke="#c98a1a" />
          <path d="M4 11H14L17 21 14 22V31H10V24H8V31H4V22L1 21Z" fill="#fbb829" stroke="#b97d14" strokeWidth="0.8" />
          <path d="M4 11H14L9 17Z" fill="#e8710a" />
        </svg>
      </button>

      <div className="absolute bottom-2 left-1/2 flex h-[34px] w-[312px] -translate-x-1/2 items-center rounded-full bg-[#fcfbf9] px-3 text-sm font-semibold whitespace-nowrap text-black shadow-[0_2px_5px_rgba(0,0,0,0.35)]">
        <span className="h-[18px] w-8 shrink-0 rounded-full bg-[#1da1f2]" />
        <span className="ml-1.5">verified host</span>
        <span className="ml-auto h-[18px] w-8 shrink-0 rounded-full border border-[#ccc] bg-white" />
        <span className="ml-1.5">external listings</span>
      </div>

      <a href="#" className="absolute bottom-1 left-2.5 font-['Open_Sans'] text-xl leading-6 font-medium">
        <span className="text-[#4285f4]">G</span>
        <span className="text-[#ea4335]">o</span>
        <span className="text-[#fbbc05]">o</span>
        <span className="text-[#4285f4]">g</span>
        <span className="text-[#34a853]">l</span>
        <span className="text-[#ea4335]">e</span>
      </a>
      <div className="absolute right-0 bottom-0 flex h-3.5 items-center gap-3 bg-[#f5f5f5]/75 px-1.5 font-[Roboto] text-[10px] whitespace-nowrap text-black">
        <button>Keyboard shortcuts</button>
        <span>Map data ©2024 Google</span>
        <a href="#">Terms</a>
        <a href="#">Report a map error</a>
      </div>
    </div>
  );
}

const steps = ["Save your preferences", "Ohana searches for you", "Sublease with confidence"];

export default function App() {
  return (
    <div className="relative h-screen overflow-hidden bg-[#4d8a1a] pt-12 pr-[90px] pb-[84px] pl-[66px] font-[Inter,sans-serif]">
      <Wallpaper />
      <div className="relative flex h-full flex-col overflow-hidden rounded-[20px] bg-[#fcfbf9] shadow-[0_0_0_1px_rgba(0,0,0,0.35),0_16px_70px_rgba(0,0,0,0.55)]">
        <TabStrip />
        <Toolbar />
        <SiteHeader />
        <div className="flex h-12 shrink-0 items-center justify-center bg-[#11616f] text-lg font-medium text-white">
          <p>
            Ohana has proudly <b className="font-bold">matched 1,160 people</b> and saved hosts{" "}
            <b className="font-bold">$3,407,684 in rent</b> since March
          </p>
        </div>
        <main className="flex min-h-0 flex-1 flex-col items-center overflow-hidden [&>*]:shrink-0">
          <Hero />
          <section className="mt-24 flex w-full flex-col items-center">
            <h2 className="font-['Open_Sans'] text-[31px] leading-10 font-semibold text-black">Wondering where to live?</h2>
            <button className="mt-3.5 h-11 rounded-lg bg-[#ff7108] px-7 text-base font-medium text-white">
              Browse all available rooms
            </button>
            <p className="mt-[22px] flex items-center gap-2 text-base leading-6 font-medium text-[#1f1f1f]">
              <span className="size-[18px] rounded-sm bg-[#fc8f00]" />
              Density of 18 - 25 year olds
            </p>
            <MapPanel />
          </section>
          <section className="mt-20 flex w-full flex-col items-center">
            <h2 className="font-['Open_Sans'] text-[31px] leading-10 font-semibold text-[#222]">
              We'll text you as soon as your ideal place is posted
            </h2>
            <div className="mt-6 grid w-full max-w-[1100px] grid-cols-3 gap-6">
              {steps.map((s) => (
                <div key={s} className="flex justify-center rounded-xl bg-white px-20 pt-6 pb-24">
                  <h3 className="text-center font-['Open_Sans'] text-2xl leading-[29px] font-semibold text-black">{s}</h3>
                </div>
              ))}
            </div>
          </section>
        </main>
      </div>
    </div>
  );
}
